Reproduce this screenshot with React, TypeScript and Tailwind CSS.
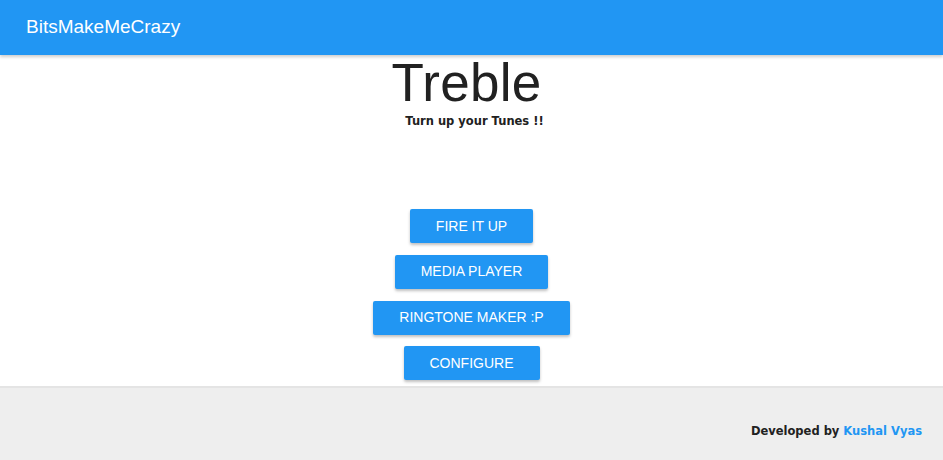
import { ReactNode } from 'react'

const sans = { fontFamily: '"Liberation Sans", Arial, sans-serif' }

function ActionButton({ children }: { children: ReactNode }) {
  return (
    <button className="h-[34px] px-[26px] rounded-[2px] bg-[#2196f3] text-white text-[14px] uppercase shadow-[0_2px_3px_rgba(0,0,0,0.25)]">
      {children}
    </button>
  )
}

export default function App() {
  return (
    <div className="w-[943px] h-[460px] flex flex-col bg-white font-['Liberation_Sans',Arial,sans-serif]">
      <header className="h-[55px] shrink-0 bg-[#2196f3] flex items-center pl-[26px] shadow-[0_2px_3px_rgba(0,0,0,0.2)] z-10">
        <span className="text-white text-[19px]">BitsMakeMeCrazy</span>
      </header>

      <main className="flex-1 flex flex-col items-center">
        <h1 className="text-[53px] leading-[52px] mt-[2px] mr-[10px] tracking-[0.3px] text-[#212121]">Treble</h1>
        <p className="text-[11.5px] font-bold text-[#212121] mt-[4px] ml-[6px] font-['DejaVu_Sans',Verdana,sans-serif]">
          Turn up your Tunes !!
        </p>

        <div className="flex flex-col items-center gap-[11.7px] mt-[79px]" style={sans}>
          <ActionButton>Fire it up</ActionButton>
          <ActionButton>Media Player</ActionButton>
          <ActionButton>Ringtone Maker :P</ActionButton>
          <ActionButton>Configure</ActionButton>
        </div>
      </main>

      <footer className="h-[74px] shrink-0 bg-[#eeeeee] border-t-2 border-[#e4e4e4] flex items-center justify-end pr-[21px] pt-[16px]">
        <span className="text-[11.5px] font-bold text-[#212121] font-['DejaVu_Sans',Verdana,sans-serif]">
          Developed by <span className="text-[#2196f3]">Kushal Vyas</span>
        </span>
      </footer>
    </div>
  )
}
